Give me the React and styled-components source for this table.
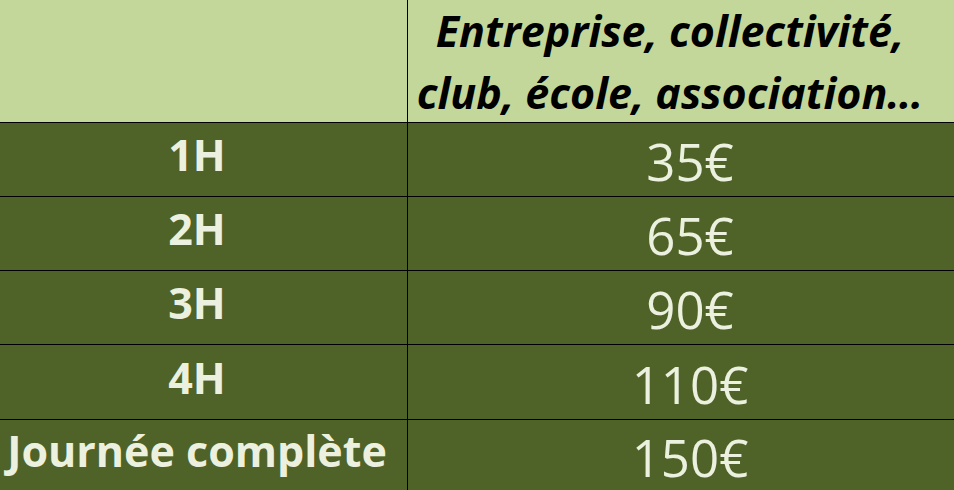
import styled, { createGlobalStyle } from "styled-components";

const GlobalStyle = createGlobalStyle`
  html, body {
    margin: 0;
    padding: 0;
    background: #4f6228;
  }
  * {
    box-sizing: border-box;
  }
`;

const rows = [
    { label: "1H", price: "35€" },
    { label: "2H", price: "65€" },
    { label: "3H", price: "90€" },
    { label: "4H", price: "110€" },
    { label: "Journée complète", price: "150€" },
];

const Table = styled.div`
  display: grid;
  grid-template-columns: 408px 1fr;
  grid-template-rows: 123px 74px 74px 74px 75px 1fr;
  width: 954px;
  height: 490px;
  overflow: hidden;
  font-family: "Open Sans", "Noto Sans", sans-serif;
`;

const HeadCell = styled.div`
  background: #c4d79b;
  border-bottom: 1px solid #000;
  border-right: ${(p) => (p.$first ? "1px solid #000" : "none")};
  display: flex;
  flex-direction: column;
  align-items: center;
  justify-content: flex-start;
  gap: 3px;
  padding-top: 1px;
  padding-right: 22px;
`;

const HeadLine = styled.span`
  display: block;
  color: #000;
  font-weight: 700;
  font-style: italic;
  font-size: 43px;
  line-height: 59px;
  white-space: nowrap;
`;

const Label = styled.div`
  background: #4f6228;
  border-bottom: ${(p) => (p.$last ? "none" : "1px solid #000")};
  border-right: 1px solid #000;
  display: flex;
  align-items: center;
  justify-content: center;
  padding-right: 13px;
  padding-bottom: 10px;
  color: #ebf1de;
  font-weight: 700;
  font-size: 43px;
  line-height: 1;
  white-space: nowrap;
`;

const Price = styled.div`
  background: #4f6228;
  border-bottom: ${(p) => (p.$last ? "none" : "1px solid #000")};
  display: flex;
  align-items: center;
  justify-content: center;
  padding-left: 18px;
  padding-top: 4px;
  color: #ebf1de;
  font-weight: 400;
  font-size: 51px;
  line-height: 1;
  white-space: nowrap;
`;

const App = () => {
    return (
        <>
            <GlobalStyle />
            <Table>
                <HeadCell $first />
                <HeadCell>
                    <HeadLine>Entreprise, collectivité,</HeadLine>
                    <HeadLine>club, école, association…</HeadLine>
                </HeadCell>
                {rows.map((row, i) => {
                    const last = i === rows.length - 1;
                    return [
                        <Label key={row.label} $last={last}>{row.label}</Label>,
                        <Price key={row.price} $last={last}>{row.price}</Price>,
                    ];
                })}
            </Table>
        </>
    );
};

export default App;
